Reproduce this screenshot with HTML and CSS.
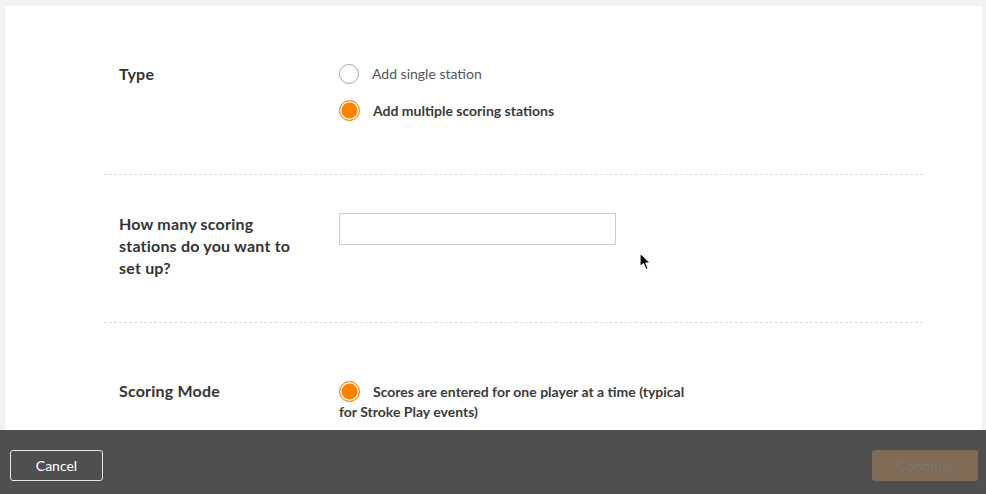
FILE: index.html
```html
<!DOCTYPE html>
<html>
<head>
<meta charset="utf-8">
<link rel="stylesheet" href="styles.css">
</head>
<body>
<div class="page">
  <main class="panel">
    <form class="form">
      <section class="row row-type">
        <div class="label">Type</div>
        <div class="control options">
          <label class="option">
            <span class="radio"></span>
            <span class="opt-text light">Add single station</span>
          </label>
          <label class="option">
            <span class="radio checked"></span>
            <span class="opt-text">Add multiple scoring stations</span>
          </label>
        </div>
      </section>
      <section class="row row-count">
        <div class="label label-wrap"><span class="label-text">How many scoring stations do you want to set up?</span></div>
        <div class="control">
          <div class="input"></div>
        </div>
      </section>
      <section class="row row-mode">
        <div class="label">Scoring Mode</div>
        <div class="control mode">
          <span class="radio checked inline"></span><span class="mode-text">Scores are entered for one player at a time (typical for Stroke Play events)</span>
        </div>
      </section>
    </form>
    <svg class="cursor" width="14" height="20" viewBox="0 0 14 20">
      <path d="M1 1 L1 15 L4.5 11.8 L7 17.5 L9.3 16.5 L6.9 11 L11.5 11 Z" fill="#000" stroke="#fff" stroke-width="1.2" stroke-linejoin="round"/>
    </svg>
  </main>
  <footer class="footer">
    <button class="btn btn-cancel" type="button">Cancel</button>
    <button class="btn btn-continue" type="button">Continue</button>
  </footer>
</div>
</body>
</html>
```
FILE: styles.css
```css
html, body {
  margin: 0;
  padding: 0;
}
body {
  background: #f2f2f2;
  font-family: "Lato", "Open Sans", "Liberation Sans", sans-serif;
  color: #3a3a3a;
  width: 986px;
  height: 494px;
  overflow: hidden;
}
.page {
  display: flex;
  flex-direction: column;
  height: 494px;
}
.panel {
  position: relative;
  flex: 1;
  overflow: hidden;
  background: #fff;
  margin: 6px 4px 0 5px;
  padding: 0 59px 0 99px;
}
.row {
  display: flex;
  border-bottom: 1px dashed #dcdcdc;
}
.label {
  box-sizing: border-box;
  width: 235px;
  flex: none;
  padding-left: 15px;
  font-weight: 700;
  font-size: 16px;
  letter-spacing: 0.2px;
  line-height: 20px;
  color: #333;
}
.label-wrap {
  line-height: 22px;
}
.label-text {
  display: block;
  width: 185px;
}
.control {
  flex: 1;
}
.row-type {
  padding: 57px 0 53px;
}
.row-type .label {
  padding-top: 1px;
}
.options {
  display: flex;
  flex-direction: column;
  gap: 16px;
}
.option {
  display: flex;
  align-items: center;
  height: 21px;
  gap: 13px;
}
.radio {
  box-sizing: border-box;
  width: 20px;
  height: 20px;
  border-radius: 50%;
  border: 1px solid #a9a9a9;
  background: #fff;
  flex: none;
}
.radio.checked {
  width: 21px;
  height: 21px;
  border: 1px solid #ff8300;
  background: #ff8300;
  box-shadow: inset 0 0 0 1.5px #fff;
}
.opt-text {
  font-size: 14px;
  font-weight: 700;
  color: #3a3a3a;
}
.opt-text.light {
  font-weight: 400;
  color: #555;
}
.row-count {
  padding: 38px 0 43px;
}
.input {
  box-sizing: border-box;
  width: 277px;
  height: 32px;
  border: 1px solid #cccccc;
  background: #fff;
}
.row-mode {
  padding: 58px 0 60px;
  border-bottom: none;
}
.mode {
  max-width: 362px;
  flex: none;
  font-size: 14px;
  font-weight: 700;
  line-height: 20px;
  color: #3a3a3a;
}
.radio.inline {
  display: inline-block;
  vertical-align: -5px;
  margin-right: 13px;
}
.cursor {
  position: absolute;
  left: 634px;
  top: 246px;
}
.footer {
  height: 64px;
  background: #4f4f4f;
  display: flex;
  align-items: flex-start;
  justify-content: space-between;
  padding: 20px 8px 0 10px;
  box-sizing: border-box;
  flex: none;
}
.btn {
  font-family: "Lato", "Open Sans", "Liberation Sans", sans-serif;
  font-size: 14px;
  height: 31px;
  border-radius: 3px;
  padding: 0;
}
.btn-cancel {
  width: 93px;
  background: transparent;
  border: 1px solid #e6e6e6;
  color: #fff;
}
.btn-continue {
  width: 106px;
  background: #7f6a56;
  border: none;
  color: #7a7670;
}
```
